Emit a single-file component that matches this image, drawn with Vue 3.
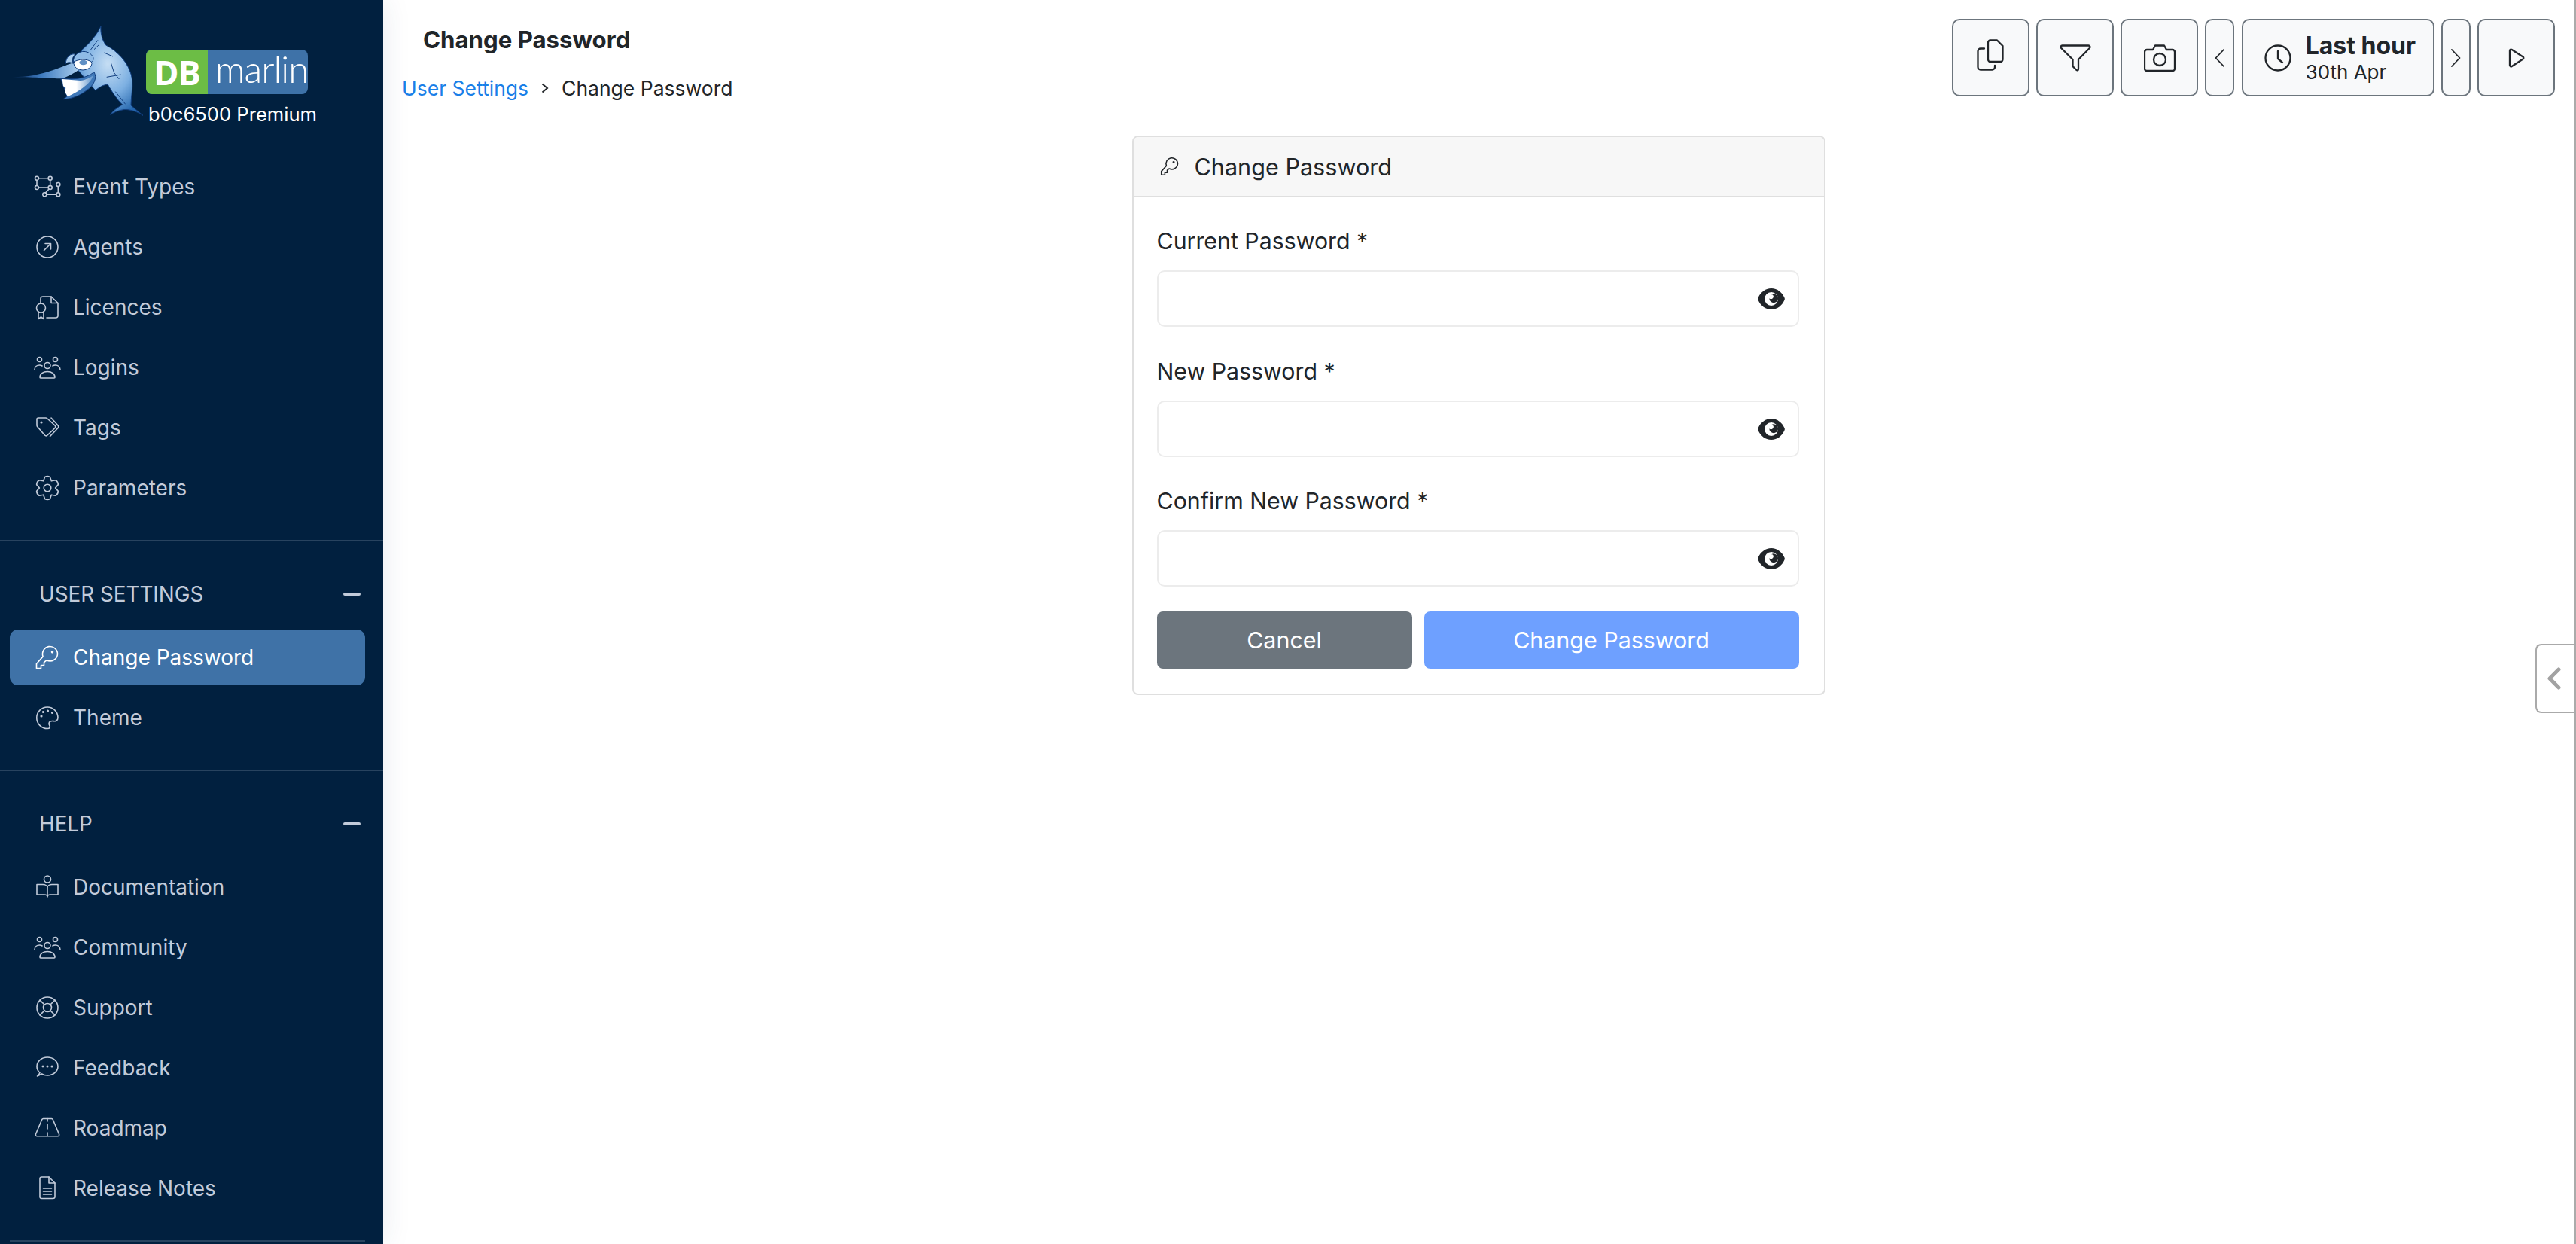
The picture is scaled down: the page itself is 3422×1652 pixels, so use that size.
<script setup>
// circle as a path so every icon can be a plain list of d strings
const c = (x, y, r) => `M${x - r} ${y}a${r} ${r} 0 1 0 ${r * 2} 0a${r} ${r} 0 1 0 ${-r * 2} 0`

const gear = () => {
  let d = ''
  for (let i = 0; i < 6; i++) {
    const a = (-90 + i * 60) * Math.PI / 180
    const pt = (r, off) => {
      const t = a + off * Math.PI / 180
      return `${(18 + r * Math.cos(t)).toFixed(2)} ${(18 + r * Math.sin(t)).toFixed(2)}`
    }
    d += `${i ? 'L' : 'M'}${pt(10.6, -30)}L${pt(15, -13)}Q${pt(16.4, 0)} ${pt(15, 13)}`
  }
  return d + 'Z'
}

const people = [
  c(7.5, 7.5, 3), c(28.5, 7.5, 3), c(18, 15.5, 4),
  'M8 31c0-4.5 4-7.5 10-7.5s10 3 10 7.5c0 .6-.4 1-1 1H9c-.6 0-1-.4-1-1Z',
  'M1 21c0-4 3-6 6.5-6 1.5 0 2.5.3 3.5 1',
  'M35 21c0-4-3-6-6.5-6-1.5 0-2.5.3-3.5 1'
]

const icons = {
  events: [
    c(4, 6.7, 2.5), c(21.7, 6.7, 2.5), c(4, 19, 2.5), c(21.7, 19, 2.5), c(32.3, 15, 2.5), c(32.3, 28.3, 2.5), c(14.3, 28.3, 2.5),
    'M6.5 6.7H19.2M4 9.2V16.5M6.5 19H19.2M21.7 9.2V16.5M32.3 17.5V25.8M16.8 28.3H29.8M15.5 26L20 21'
  ],
  agents: [c(18, 18, 14), 'M13.5 22.5L22.5 13.5M15 13.5H22.5V21'],
  licences: [
    'M9 12V7a3 3 0 0 1 3-3H23L32 12.5V29a3 3 0 0 1-3 3H17',
    'M23 4V12.5H32', c(9.5, 19, 6), 'M6 24V33.5L9.5 31L13 33.5V24'
  ],
  logins: people,
  tags: [
    'M4 7a2 2 0 0 1 2-2H16a3 3 0 0 1 2 1L28 15a2.5 2.5 0 0 1 0 3.5L18 28a2.5 2.5 0 0 1-3.5 0L5 17a3 3 0 0 1-1-2Z',
    'M23 5L32 15a2.5 2.5 0 0 1 0 3.5L21.5 29.5', c(10, 11, .8)
  ],
  params: [gear(), c(18, 18, 4.8)],
  key: [
    'M31.5 13.5a10 10 0 1 0-19.4 3.4L3.5 26.5V32.5H9.5V28.5H13.5V24.5L17 21.8A10 10 0 0 0 31.5 13.5Z',
    c(24.5, 10.8, .9)
  ],
  theme: [
    'M18 4a14 14 0 0 1 14 14c0 4-3 5.2-6 4.6-3-.5-6 .4-6 3.5 0 2 2 3 1.2 5-.6 1.2-2 1.4-3.2 1.4A14 14 0 0 1 18 4Z',
    c(10, 16, .8), c(12.5, 10.5, .8), c(18.5, 9, .8), c(24.5, 11.5, .8)
  ],
  docs: [
    c(18, 7.5, 4.5),
    'M4 14.5H12c3 0 6 1.5 6 4 0-2.5 3-4 6-4H32V28H22c-2 0-4 1-4 3 0-2-2-3-4-3H4ZM18 18.5V31'
  ],
  support: [
    c(18, 18, 14), c(18, 18, 5.5),
    'M8.1 8.1L14 14M27.9 8.1L22 14M8.1 27.9L14 22M27.9 27.9L22 22'
  ],
  feedback: [
    'M8 24.5C5.5 22.5 4 19.5 4 16 4 9.5 10 4 18 4S32 9.5 32 16 26 28 18 28C15 28 12.5 27.3 10.5 26L4.5 29C6 27.5 7.5 26 8 24.5Z',
    c(12, 16, .7), c(18, 16, .7), c(24, 16, .7)
  ],
  roadmap: [
    'M12.5 5.5H23.5a2 2 0 0 1 1.8 1.2L33.5 26a2 2 0 0 1-1.8 2.8H4.3a2 2 0 0 1-1.8-2.8L10.7 6.7a2 2 0 0 1 1.8-1.2Z',
    'M18 5.5V9M18 13V19M18 24V28.5'
  ],
  notes: [
    'M10.5 3H20L28 11V29a2.5 2.5 0 0 1-2.5 2.5H10.5A2.5 2.5 0 0 1 8 29V5.5A2.5 2.5 0 0 1 10.5 3Z',
    'M20 3V11H28M12.5 18H23.5M12.5 22H23.5M12.5 26H23.5'
  ]
}

const mainNav = [
  { label: 'Event Types', icon: 'events' },
  { label: 'Agents', icon: 'agents' },
  { label: 'Licences', icon: 'licences' },
  { label: 'Logins', icon: 'logins' },
  { label: 'Tags', icon: 'tags' },
  { label: 'Parameters', icon: 'params' }
]

const sections = [
  {
    title: 'USER SETTINGS',
    items: [
      { label: 'Change Password', icon: 'key', active: true },
      { label: 'Theme', icon: 'theme' }
    ]
  },
  {
    title: 'HELP',
    items: [
      { label: 'Documentation', icon: 'docs' },
      { label: 'Community', icon: 'logins' },
      { label: 'Support', icon: 'support' },
      { label: 'Feedback', icon: 'feedback' },
      { label: 'Roadmap', icon: 'roadmap' },
      { label: 'Release Notes', icon: 'notes' }
    ]
  }
]

const fields = ['Current Password *', 'New Password *', 'Confirm New Password *']
</script>

<template>
  <div class="app">
    <aside class="sidebar">
      <div class="brand">
        <svg class="fish" viewBox="0 0 552 420" width="184" height="140">
          <defs>
            <radialGradient id="fishBody" cx="0.5" cy="0.42" r="0.62">
              <stop offset="0" stop-color="#c6def4" />
              <stop offset="0.55" stop-color="#7db0e2" />
              <stop offset="1" stop-color="#2466ad" />
            </radialGradient>
            <linearGradient id="fishBill" x1="0" y1="0" x2="1" y2="0">
              <stop offset="0" stop-color="#0c2f66" />
              <stop offset="0.45" stop-color="#3f7cc0" />
              <stop offset="1" stop-color="#a9cdee" />
            </linearGradient>
            <linearGradient id="fishTeeth" x1="0" y1="0" x2="1" y2="0">
              <stop offset="0.45" stop-color="#ffffff" />
              <stop offset="1" stop-color="#5f94cc" />
            </linearGradient>
          </defs>
          <path fill="url(#fishBody)" stroke="#123f80" stroke-width="3"
            d="M300 120C325 100 355 65 372 30C370 60 378 85 392 105C440 130 490 180 497 245C500 280 492 310 492 345L540 385C510 365 480 360 462 362C440 365 425 372 410 382C425 360 445 350 458 342C440 325 415 290 400 262C385 262 372 268 350 285L260 180Z" />
          <path fill="url(#fishBill)" d="M20 232C80 232 130 222 180 205C215 193 245 180 262 175L282 205C260 220 235 232 215 238C170 238 120 232 20 232Z" />
          <path fill="#3f78b8" stroke="#123f80" stroke-width="3" d="M212 238C260 242 310 240 345 212C358 235 345 265 315 285C290 305 255 320 222 320C232 312 240 310 236 305Z" />
          <path fill="url(#fishTeeth)" d="M218 240L290 246C310 244 330 234 342 224C335 255 290 285 240 310L228 290L232 275L222 268Z" />
          <path fill="#a9cdee" stroke="#123f80" stroke-width="3" d="M232 178C232 155 250 135 270 142C260 150 255 165 262 178C250 172 240 172 232 178Z" />
          <ellipse cx="300" cy="178" rx="36" ry="26" fill="#fff" stroke="#123f80" stroke-width="3" />
          <ellipse cx="302" cy="174" rx="16" ry="10" fill="#5f8fc4" />
          <path fill="#8fbbe6" stroke="#123f80" stroke-width="3" d="M262 168C265 130 315 115 340 150C345 160 340 170 335 172C315 158 285 160 262 172Z" />
          <path fill="none" stroke="#123f80" stroke-width="3" d="M330 125L360 85M345 122L368 100M385 135L420 150M412 175L425 215L445 240M395 232L452 222M430 290L470 340" />
        </svg>
        <div class="brand-col">
          <div class="logo">
            <span class="logo-db">DB</span>
            <span class="logo-name">marlin</span>
          </div>
          <div class="brand-sub">b0c6500 Premium</div>
        </div>
      </div>

      <nav class="group">
        <a v-for="item in mainNav" :key="item.label" class="nav-item">
          <svg class="nav-icon" viewBox="0 0 36 36" width="36" height="36">
            <path v-for="d in icons[item.icon]" :key="d" :d="d" />
          </svg>
          <span>{{ item.label }}</span>
        </a>
      </nav>

      <section v-for="section in sections" :key="section.title" class="group group-ruled">
        <div class="group-head">
          <span>{{ section.title }}</span>
          <span class="minus"></span>
        </div>
        <a
          v-for="item in section.items"
          :key="item.label"
          class="nav-item"
          :class="{ active: item.active }"
        >
          <svg class="nav-icon" viewBox="0 0 36 36" width="36" height="36">
            <path v-for="d in icons[item.icon]" :key="d" :d="d" />
          </svg>
          <span>{{ item.label }}</span>
        </a>
      </section>
      <div class="sidebar-end"></div>
    </aside>

    <main class="main">
      <header class="topbar">
        <div class="heading">
          <h1 class="title">Change Password</h1>
          <div class="crumbs">
            <a class="crumb-link">User Settings</a>
            <svg class="crumb-sep" viewBox="0 0 10 14" width="10" height="14">
              <path d="M1.5 1.5L8 7L1.5 12.5" />
            </svg>
            <span>Change Password</span>
          </div>
        </div>

        <div class="toolbar">
          <button class="tool tool-square">
            <svg class="tool-icon lift" viewBox="0 0 36 42" width="36" height="42">
              <path d="M18 1.5H27L34.5 9V27a3 3 0 0 1-3 3H18a3 3 0 0 1-3-3V4.5a3 3 0 0 1 3-3Z" />
              <path d="M10 12.5H5A3.5 3.5 0 0 0 1.5 16V37A3.5 3.5 0 0 0 5 40.5H20.5A3.5 3.5 0 0 0 24 37V35" />
            </svg>
          </button>
          <button class="tool tool-square">
            <svg class="tool-icon" viewBox="0 0 42 36" width="42" height="36">
              <path d="M3.5 1.5H38.5a2 2 0 0 1 1.5 3.3L25 20V33a1.5 1.5 0 0 1-2.5 1L17.5 29V20L2 4.8A2 2 0 0 1 3.5 1.5Z" />
            </svg>
          </button>
          <button class="tool tool-square">
            <svg class="tool-icon" viewBox="0 0 42 36" width="42" height="36">
              <path d="M4 7H12L15 1.5H27L30 7H38a3 3 0 0 1 3 3V32a3 3 0 0 1-3 3H4a3 3 0 0 1-3-3V10a3 3 0 0 1 3-3Z" />
              <path :d="c(21, 20, 8)" />
            </svg>
          </button>
          <button class="tool tool-narrow">
            <svg class="tool-icon thin" viewBox="0 0 13 24" width="13" height="24">
              <path d="M12 1L1.5 12L12 23" />
            </svg>
          </button>
          <button class="tool tool-time">
            <svg class="tool-icon" viewBox="0 0 36 36" width="36" height="36">
              <path :d="c(18, 18, 16.5)" />
              <path d="M18 9V19L24 24" />
            </svg>
            <span class="time-text">
              <strong>Last hour</strong>
              <small>30th Apr</small>
            </span>
          </button>
          <button class="tool tool-narrow">
            <svg class="tool-icon thin" viewBox="0 0 13 24" width="13" height="24">
              <path d="M1 1L11.5 12L1 23" />
            </svg>
          </button>
          <button class="tool tool-square">
            <svg class="tool-icon" viewBox="0 0 22 26" width="22" height="26">
              <path d="M2 3.5C2 2 3.5 1.2 4.8 2L19.5 11.5C20.6 12.2 20.6 13.8 19.5 14.5L4.8 24C3.5 24.8 2 24 2 22.5Z" />
            </svg>
          </button>
        </div>
      </header>

      <div class="content">
        <form class="card" @submit.prevent>
          <div class="card-head">
            <svg class="card-head-icon" viewBox="0 0 36 36" width="28" height="28">
              <path v-for="d in icons.key" :key="d" :d="d" />
            </svg>
            <span>Change Password</span>
          </div>
          <div class="card-body">
            <div v-for="label in fields" :key="label" class="field">
              <label class="field-label">{{ label }}</label>
              <div class="field-box">
                <input class="field-input" type="password" />
                <svg class="eye" viewBox="0 0 36 28" width="36" height="28">
                  <path fill-rule="evenodd" d="M18 0C26 0 32.5 5.5 35.5 12.5C36 13.5 36 14.5 35.5 15.5C32.5 22.5 26 28 18 28S3.5 22.5.5 15.5C0 14.5 0 13.5.5 12.5C3.5 5.5 10 0 18 0ZM18 5A9 9 0 1 0 18 23A9 9 0 1 0 18 5Z" />
                  <path d="M18 8.3C18.5 8.3 19.2 8.4 19.8 8.6A3.2 3.2 0 0 1 15.3 13.2A5.9 5.9 0 1 0 18 8.3Z" />
                </svg>
              </div>
            </div>
            <div class="actions">
              <button class="btn btn-cancel" type="button">Cancel</button>
              <button class="btn btn-save" type="submit">Change Password</button>
            </div>
          </div>
        </form>
      </div>

      <button class="collapse-tab">
        <svg viewBox="0 0 18 30" width="18" height="30">
          <path d="M15 3L3 15L15 27" />
        </svg>
      </button>
    </main>
  </div>
</template>

<style scoped>
.app {
  display: flex;
  height: 1652px;
  overflow: hidden;
  font-family: Inter, "Liberation Sans", sans-serif;
  color: #212529;
  background: #fff;
}

/* Sidebar */
.sidebar {
  position: relative;
  z-index: 1;
  flex: 0 0 509px;
  display: flex;
  flex-direction: column;
  background: #01203f;
  box-shadow: 0 0 36px rgba(40, 60, 110, 0.1);
  color: #c2cbda;
}

.brand {
  display: flex;
  height: 186px;
  padding: 25px 0 0 10px;
  box-sizing: border-box;
}

.fish {
  flex: none;
}

.brand-col {
  padding-top: 41px;
}

.logo {
  display: flex;
  width: 215px;
  height: 59px;
  border-radius: 8px;
  background: #3e72a8;
  color: #fff;
}

.logo-db {
  flex: 0 0 82px;
  border-radius: 8px 0 0 8px;
  background: #6cbd45;
  text-align: center;
  font: 700 45px/59px "Open Sans", sans-serif;
  letter-spacing: -1px;
}

.logo-name {
  flex: 1;
  padding-left: 10px;
  font: 300 49px/50px Lato, sans-serif;
  letter-spacing: -1px;
}

.brand-sub {
  margin: 10px 0 0 3px;
  color: #fff;
  font-size: 25.6px;
  line-height: 34px;
  white-space: nowrap;
}

.group {
  padding-top: 25px;
  padding-bottom: 26px;
}

.group-ruled {
  padding-top: 0;
  border-top: 2px solid #28435f;
}

.group-head {
  display: flex;
  align-items: center;
  justify-content: space-between;
  height: 36px;
  margin: 52px 30px 29px 52px;
  font-size: 27.8px;
}

.minus {
  width: 23px;
  height: 4px;
  border-radius: 2px;
  background: #c2cbda;
}

.nav-item {
  display: flex;
  align-items: center;
  gap: 16px;
  height: 74px;
  margin: 0 24px 6px 13px;
  padding-left: 32px;
  border-radius: 11px;
  font-size: 28px;
}

.nav-item.active {
  background: #3f72a7;
  color: #fff;
}

.nav-icon {
  flex: none;
  fill: none;
  stroke: currentColor;
  stroke-width: 1.6;
  stroke-linejoin: round;
  stroke-linecap: round;
}

.sidebar-end {
  height: 3px;
  margin: 0 24px 0 13px;
  background: #28435f;
}

/* Main column */
.main {
  position: relative;
  flex: 1;
  min-width: 0;
  border-right: 3px solid #aaa;
}

.topbar {
  display: flex;
  align-items: flex-start;
  justify-content: space-between;
  height: 180px;
  padding: 25px 25px 0 25px;
  box-sizing: border-box;
}

.title {
  margin: 8px 0 0 28px;
  font-size: 31.2px;
  font-weight: 700;
  line-height: 40px;
}

.crumbs {
  display: flex;
  align-items: center;
  gap: 17px;
  margin-top: 24px;
  font-size: 26.5px;
  line-height: 40px;
}

.crumb-link {
  color: #1a7fe8;
}

.crumb-sep {
  fill: none;
  stroke: #212529;
  stroke-width: 2;
}

.toolbar {
  display: flex;
  gap: 9.2px;
}

.tool {
  display: flex;
  align-items: center;
  justify-content: center;
  height: 103px;
  padding: 0;
  border: 2px solid #6c757d;
  border-radius: 10px;
  background: #f8f9fa;
  color: #212529;
  font-family: inherit;
}

.tool-square {
  width: 103px;
}

.tool-narrow {
  width: 39px;
}

.tool-time {
  justify-content: flex-start;
  gap: 19px;
  width: 256px;
  padding-left: 28px;
  box-sizing: border-box;
}

.tool-icon {
  flex: none;
  fill: none;
  stroke: currentColor;
  stroke-width: 2.3;
  stroke-linejoin: round;
  stroke-linecap: round;
}

.tool-icon.thin {
  stroke-width: 1.8;
}

.lift {
  margin-bottom: 7px;
}

.time-text {
  display: flex;
  flex-direction: column;
  align-items: flex-start;
  padding-top: 1px;
  white-space: nowrap;
}

.time-text strong {
  font-size: 32px;
  font-weight: 700;
  line-height: 38px;
}

.time-text small {
  font-size: 26px;
  line-height: 32px;
}

.content {
  display: flex;
  justify-content: center;
}

/* Card */
.card {
  width: 921px;
  box-sizing: border-box;
  border: 2px solid #dfdfdf;
  border-radius: 8px;
  overflow: hidden;
}

.card-head {
  display: flex;
  align-items: center;
  gap: 19px;
  height: 80px;
  padding-left: 34px;
  background: #f7f7f7;
  border-bottom: 2px solid #dfdfdf;
  box-sizing: border-box;
  font-size: 30.6px;
}

.card-head-icon {
  flex: none;
  fill: none;
  stroke: #212529;
  stroke-width: 2;
  stroke-linejoin: round;
  stroke-linecap: round;
}

.card-body {
  padding: 38px 33px 33px 31px;
}

.field {
  margin-bottom: 38.5px;
}

.field:nth-child(3) {
  margin-bottom: 33px;
}

.field-label {
  display: block;
  margin-bottom: 19px;
  font-size: 30.3px;
  line-height: 40px;
}

.field-box {
  position: relative;
}

.field-input {
  display: block;
  width: 100%;
  height: 75px;
  padding: 0 20px;
  box-sizing: border-box;
  border: 2px solid #ececec;
  border-radius: 10px;
  background: #fff;
  outline: none;
}

.eye {
  position: absolute;
  top: 24px;
  right: 19px;
  fill: #212529;
}

.actions {
  display: flex;
  gap: 16px;
}

.btn {
  height: 76px;
  border: 0;
  border-radius: 8px;
  color: #fff;
  font-family: inherit;
  font-size: 30.4px;
}

.btn-cancel {
  flex: 0 0 339px;
  background: #6c757d;
}

.btn-save {
  flex: 1;
  background: #6ea0ff;
}

.collapse-tab {
  position: absolute;
  top: 855px;
  right: 0;
  display: flex;
  align-items: center;
  justify-content: center;
  width: 51px;
  height: 92px;
  padding: 0 3px 0 0;
  border: 2px solid #aaa;
  border-right: 0;
  border-radius: 8px 0 0 8px;
  background: #fff;
}

.collapse-tab svg {
  fill: none;
  stroke: #a2a2a2;
  stroke-width: 5;
  stroke-linecap: round;
  stroke-linejoin: round;
}
</style>

<style>
html,
body {
  margin: 0;
  overflow: hidden;
  background: #fff;
}
</style>
